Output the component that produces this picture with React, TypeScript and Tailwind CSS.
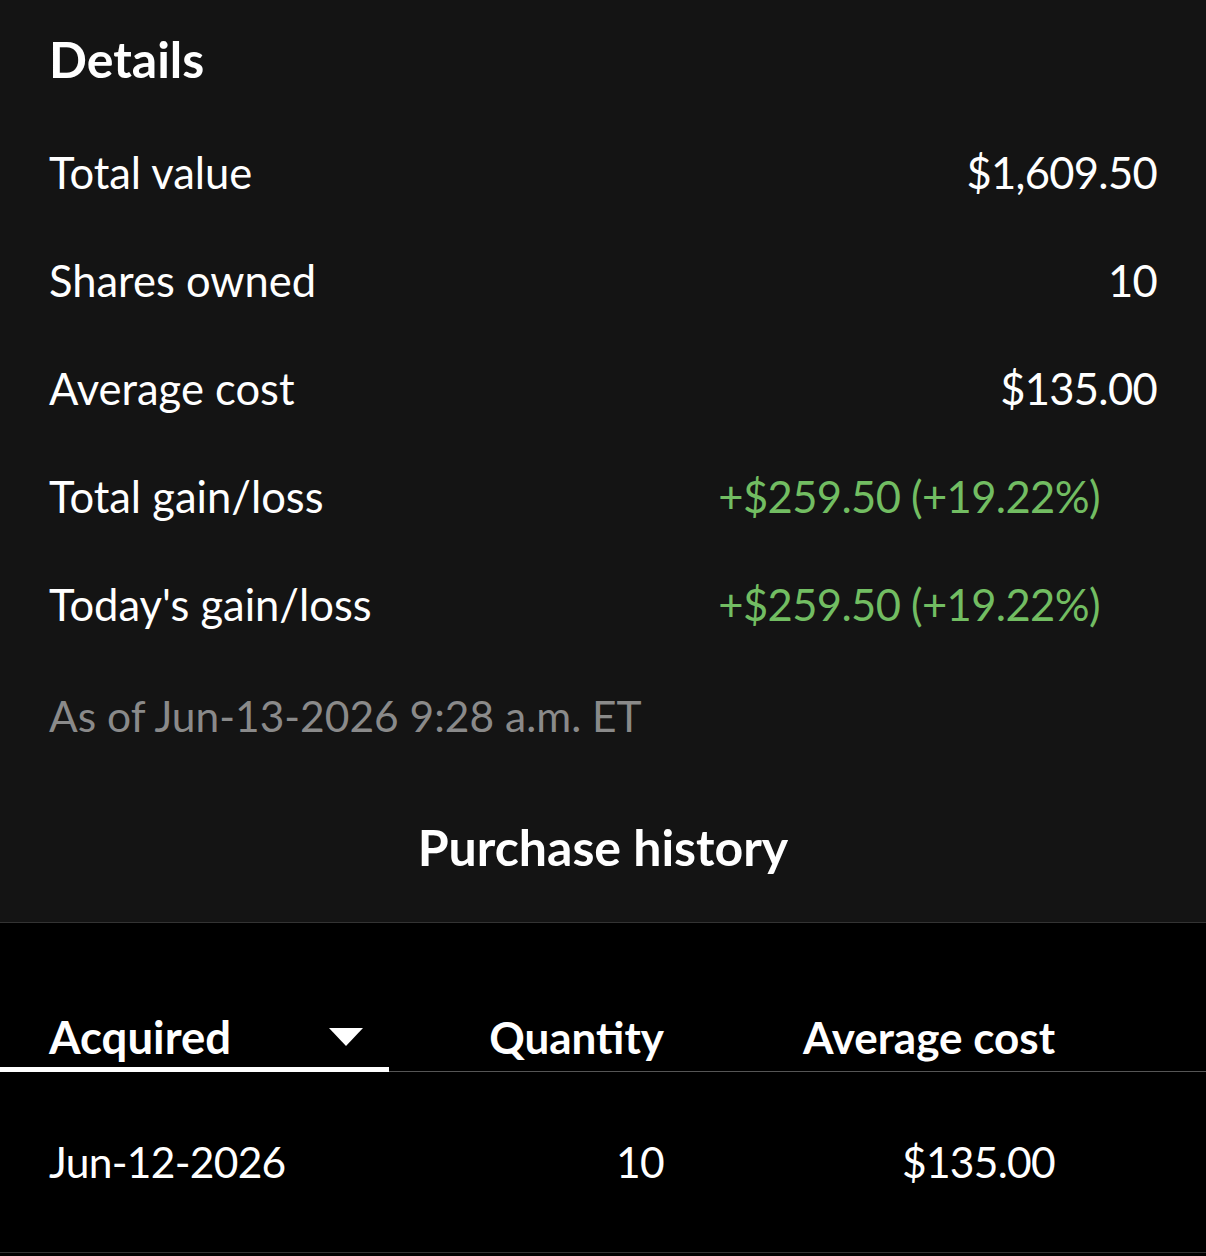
const rows = [
  { label: "Total value", value: "$1,609.50", gain: false },
  { label: "Shares owned", value: "10", gain: false },
  { label: "Average cost", value: "$135.00", gain: false },
  { label: "Total gain/loss", value: "+$259.50 (+19.22%)", gain: true },
  { label: "Today's gain/loss", value: "+$259.50 (+19.22%)", gain: true },
];

const App = () => {
  return (
    <div className="min-h-[1256px] w-[1206px] bg-black font-['Lato',sans-serif] text-white">
      <section className="border-b border-[#333] bg-[#141414] px-[49px] pt-[29px]">
        <h1 className="flex h-[60px] items-center text-[50px] font-bold leading-none">Details</h1>
        <div className="mt-[30px]">
          {rows.map((row) => (
            <div key={row.label} className="flex h-[108px] items-center justify-between text-[43.5px]">
              <span>{row.label}</span>
              <span className={row.gain ? "mr-[57px] tracking-[-0.6px] text-[#72bd62]" : "tracking-[-0.7px]"}>
                {row.value}
              </span>
            </div>
          ))}
        </div>
        <p className="flex h-[114px] items-center text-[42.5px] text-[#8a8a8a]">
          As of Jun-13-2026 9:28 a.m. ET
        </p>
        <h2 className="flex h-[149px] items-center justify-center text-[50px] font-bold">
          Purchase history
        </h2>
      </section>

      <section className="bg-black">
        <div className="flex h-[149px] items-end border-b border-[#555] text-[44px] font-bold">
          <div className="-mb-px flex h-[65px] w-[389px] items-center justify-between border-b-[5px] border-white pl-[49px] pr-[25px]">
            <span className="text-[45.5px]">Acquired</span>
            <svg width="34" height="18" viewBox="0 0 34 18" className="mr-px">
              <path d="M0 0 H34 L17 18 Z" fill="white" />
            </svg>
          </div>
          <div className="-mb-px flex h-[65px] w-[275px] items-center justify-end pb-[5px]">Quantity</div>
          <div className="-mb-px flex h-[65px] w-[391px] items-center justify-end pb-[5px]">Average cost</div>
        </div>
        <div className="flex h-[181px] items-center border-b border-[#333] text-[42.5px] tracking-[-0.7px]">
          <div className="w-[389px] pl-[49px]">Jun-12-2026</div>
          <div className="w-[275px] text-right">10</div>
          <div className="w-[391px] text-right">$135.00</div>
        </div>
      </section>
    </div>
  );
};

export default App;
